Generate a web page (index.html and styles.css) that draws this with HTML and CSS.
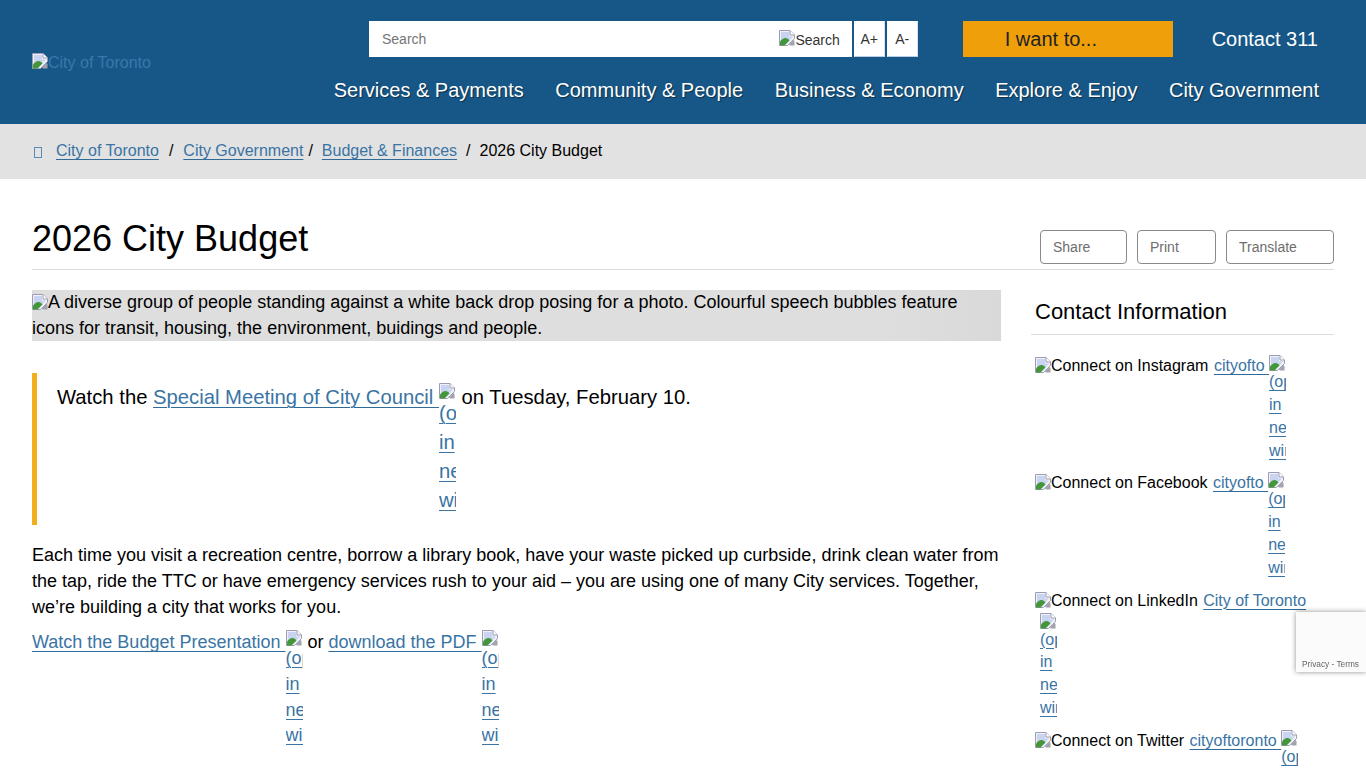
FILE: index.html
```html
<!DOCTYPE html>
<html lang="en">
<head>
  <meta charset="UTF-8" />
  <meta name="viewport" content="width=device-width, initial-scale=1.0"/>
  <title>2026 City Budget - City of Toronto</title>
  <link rel="stylesheet" href="styles.css">
</head>
<body>
  <svg class="sprite" width="0" height="0" aria-hidden="true">
    <symbol id="broken" viewBox="0 0 16 16">
      <path d="M.5 .5H11L15.500 5V8.500L8.500 15.500H.5Z" fill="#eef0fa" stroke="#9c9cb2"/>
      <path d="M11 .5V5H15.500" fill="#fff" stroke="#9c9cb2"/>
      <path d="M2 2H10V6.500H14L6.500 14H2Z" fill="#c9d4f0"/>
      <path d="M1 15.500V11.500C3 9 5 7.500 7 8C8.500 8.500 10 9.500 10.500 10.500L5.500 15.500Z" fill="#43963a"/>
      <path d="M14.500 10L15.500 11V15.500H11L10 14.500Z" fill="#a2a2ae"/>
    </symbol>
  </svg>

  <header class="site-header">
    <a class="logo" href="#"><svg class="broken-icon"><use href="#broken"/></svg>City of Toronto</a>
    <div class="header-right">
      <div class="header-tools">
        <form class="search-form">
          <span class="search-input">Search</span>
          <button class="search-btn" type="button"><svg class="broken-icon"><use href="#broken"/></svg>Search</button>
        </form>
        <button class="font-btn" type="button">A+</button>
        <button class="font-btn" type="button">A-</button>
        <button class="want-btn" type="button">I want to...</button>
        <a class="contact-link" href="#">Contact 311</a>
      </div>
      <nav class="main-nav">
        <a href="#">Services &amp; Payments</a>
        <a href="#">Community &amp; People</a>
        <a href="#">Business &amp; Economy</a>
        <a href="#">Explore &amp; Enjoy</a>
        <a href="#">City Government</a>
      </nav>
    </div>
  </header>

  <div class="breadcrumb">
    <span class="home-icon">&#xE021;</span>
    <a href="#">City of Toronto</a>
    <span class="sep-one">/</span>
    <a href="#">City Government</a>
    <span class="sep-two">/</span>
    <a href="#">Budget &amp; Finances</a>
    <span class="sep-last">/</span>
    <span>2026 City Budget</span>
  </div>

  <main class="page">
    <div class="title-row">
      <h1>2026 City Budget</h1>
      <div class="page-actions">
        <button class="share" type="button">Share</button>
        <button class="print" type="button">Print</button>
        <button class="translate" type="button">Translate</button>
      </div>
    </div>

    <div class="columns">
      <div class="content">
        <div class="hero"><svg class="broken-icon"><use href="#broken"/></svg>A diverse group of people standing against a white back drop posing for a photo. Colourful speech bubbles feature icons for transit, housing, the environment, buidings and people.</div>

        <div class="callout">
          Watch the <a href="#">Special Meeting of City Council <span class="ext"><svg class="broken-icon"><use href="#broken"/></svg><u>(opens in new window)</u></span></a> on Tuesday, February 10.
        </div>

        <p>Each time you visit a recreation centre, borrow a library book, have your waste picked up curbside, drink clean water from the tap, ride the TTC or have emergency services rush to your aid – you are using one of many City services. Together, we’re building a city that works for you.</p>

        <p class="links"><a href="#">Watch the Budget Presentation <span class="ext"><svg class="broken-icon"><use href="#broken"/></svg><u>(opens in new window)</u></span></a> or <a href="#">download the PDF <span class="ext"><svg class="broken-icon"><use href="#broken"/></svg><u>(opens in new window)</u></span></a></p>
      </div>

      <aside class="sidebar">
        <h2>Contact Information</h2>
        <ul class="social">
          <li><svg class="broken-icon"><use href="#broken"/></svg>Connect on Instagram <a href="#">cityofto <span class="ext"><svg class="broken-icon"><use href="#broken"/></svg><u>(opens in new window)</u></span></a></li>
          <li><svg class="broken-icon"><use href="#broken"/></svg>Connect on Facebook <a href="#">cityofto <span class="ext"><svg class="broken-icon"><use href="#broken"/></svg><u>(opens in new window)</u></span></a></li>
          <li><svg class="broken-icon"><use href="#broken"/></svg>Connect on LinkedIn <a href="#">City of Toronto <span class="ext ext-wrapped"><svg class="broken-icon"><use href="#broken"/></svg><u>(opens in new window)</u></span></a></li>
          <li><svg class="broken-icon"><use href="#broken"/></svg>Connect on Twitter <a href="#">cityoftoronto <span class="ext"><svg class="broken-icon"><use href="#broken"/></svg><u>(opens in new window)</u></span></a></li>
        </ul>
      </aside>
    </div>
  </main>

  <div class="recaptcha"><span>Privacy - Terms</span></div>
</body>
</html>
```

FILE: styles.css
```css
html, body {
  height: 100%;
  overflow: hidden;
}
body {
  margin: 0;
  font-family: "Liberation Sans", Arial, sans-serif;
  font-size: 18px;
  line-height: 1.42857;
  color: #000;
  background: #fff;
}
a {
  color: #3a74a4;
  text-decoration: underline;
  text-decoration-color: #2f6a99;
  text-decoration-thickness: 1px;
  text-underline-offset: 3px;
}
u {
  text-decoration-thickness: 1px;
  text-underline-offset: 3px;
}
.sprite {
  position: absolute;
}
.broken-icon {
  width: 16px;
  height: 16px;
  vertical-align: -2px;
}
.ext {
  display: inline-block;
  width: 17px;
  overflow: hidden;
  vertical-align: top;
}
.ext .broken-icon {
  display: block;
}

/* header */
.site-header {
  height: 124px;
  box-sizing: border-box;
  background: #165788;
  padding: 21px 47px 0 32px;
  display: flex;
  justify-content: space-between;
}
.logo {
  align-self: flex-start;
  margin-top: 31px;
  font-size: 16px;
  color: #3a78aa;
  text-decoration: none;
}
.logo .broken-icon {
  vertical-align: -1px;
}
.header-right {
  display: flex;
  flex-direction: column;
  align-items: flex-end;
}
.header-tools {
  display: flex;
  width: 949px;
  height: 36px;
  margin-right: 1px;
}
.search-form {
  width: 483px;
  background: #fff;
  display: flex;
  justify-content: space-between;
  align-items: center;
  padding: 0 12px 0 13px;
  box-sizing: border-box;
}
.search-input {
  margin-top: 2px;
  font-size: 14px;
  color: #757575;
}
.search-btn {
  margin-bottom: 1px;
  border: none;
  background: none;
  padding: 0;
  font: 14px "Liberation Sans", Arial, sans-serif;
  color: #333;
}
.search-btn .broken-icon {
  vertical-align: -1px;
}
.font-btn {
  width: 31px;
  margin-left: 2px;
  padding: 0;
  background: #fff;
  border: 1px solid #fff;
  border-right-color: #d5e2ee;
  border-bottom-color: #b9cfe2;
  font: 14px "Liberation Sans", Arial, sans-serif;
  color: #333;
}
.want-btn {
  width: 210px;
  margin-left: 45px;
  padding: 0 0 0 42px;
  text-align: left;
  border: none;
  background: #ee9f0a;
  font: 20px "Liberation Sans", Arial, sans-serif;
  color: #222;
}
.contact-link {
  margin-left: 39px;
  font-size: 20px;
  line-height: 36px;
  color: #fff;
  text-decoration: none;
  white-space: nowrap;
}
.main-nav {
  display: flex;
  gap: 31.5px;
  margin-top: 19px;
}
.main-nav a {
  font-size: 20px;
  color: #fff;
  text-decoration: none;
  text-shadow: 1px 1px 1px rgba(0, 0, 0, .45);
}

/* breadcrumb */
.breadcrumb {
  height: 55px;
  box-sizing: border-box;
  background: #e2e2e2;
  padding: 0 34px;
  display: flex;
  align-items: center;
  font-size: 16px;
}
.home-icon {
  width: 8px;
  height: 11px;
  box-sizing: border-box;
  border: 1px solid #5a8db5;
  overflow: hidden;
  color: transparent;
  margin-right: 14px;
  margin-top: 2px;
}
.sep-one {
  margin: 0 10px;
}
.sep-two {
  margin: 0 9px 0 5px;
}
.sep-last {
  margin: 0 9px;
}

/* page */
.page {
  padding: 0 32px;
}
.title-row {
  height: 91px;
  box-sizing: border-box;
  border-bottom: 1px solid #ddd;
  display: flex;
  justify-content: space-between;
  align-items: flex-start;
}
h1 {
  margin: 38px 0 0;
  font-size: 36px;
  font-weight: 400;
  line-height: 44px;
}
.page-actions {
  display: flex;
  gap: 10px;
  margin-top: 51px;
}
.page-actions button {
  height: 34px;
  padding: 0 0 0 12px;
  text-align: left;
  background: #fff;
  border: 1px solid #8a8a8a;
  border-radius: 4px;
  font: 14px "Liberation Sans", Arial, sans-serif;
  color: #6e6e6e;
}
.share { width: 87px; }
.print { width: 79px; }
.translate { width: 108px; }
.columns {
  display: flex;
  justify-content: space-between;
  padding-top: 20px;
}
.content {
  width: 969px;
}
.hero {
  background: linear-gradient(90deg, #dedede 88%, #d9d9d9);
  margin-bottom: 32px;
}
.callout {
  border-left: 5px solid #f2ae1c;
  padding: 10px 20px;
  font-size: 20.25px;
  margin-bottom: 18px;
}
.content p {
  margin: 0 0 10px;
}
.sidebar {
  width: 303px;
}
h2 {
  margin: 0 0 20px;
  padding: 7px 4px;
  border-bottom: 1px solid #ddd;
  font-size: 22px;
  font-weight: 400;
  line-height: 30px;
}
.social {
  list-style: none;
  margin: 0;
  padding: 0 15px 0 4px;
  font-size: 16px;
}
.social li {
  margin-bottom: 10px;
}
.social a {
  margin-left: 1px;
}
.ext-wrapped {
  margin-left: 5px;
}

/* recaptcha badge */
.recaptcha {
  position: fixed;
  right: 0;
  bottom: 96px;
  width: 70px;
  height: 60px;
  box-sizing: border-box;
  padding: 47px 0 0 6px;
  background: #fbfbfb;
  box-shadow: 0 0 5px rgba(0, 0, 0, .45);
  font-size: 8.3px;
  line-height: 10px;
  color: #666;
  white-space: nowrap;
}
```
